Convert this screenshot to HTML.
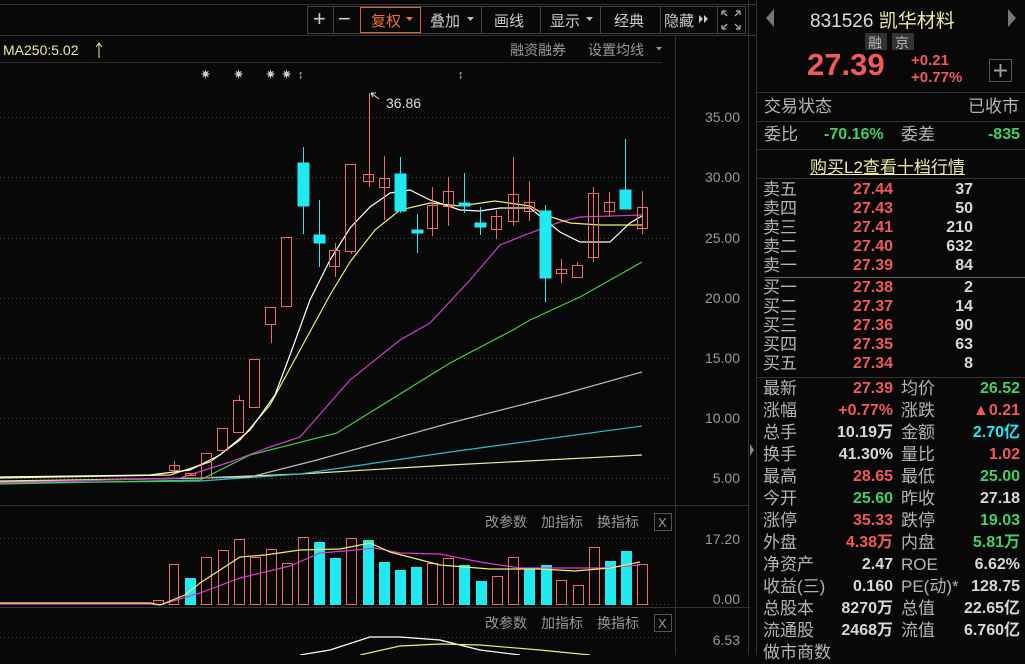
<!DOCTYPE html>
<html><head><meta charset="utf-8"><style>
*{margin:0;padding:0;box-sizing:border-box}
body{width:1025px;height:655px;background:#080808;overflow:hidden;position:relative;font-family:"Liberation Sans","Noto Sans CJK SC",sans-serif;color:#b4b4b4}
.a{position:absolute;white-space:nowrap}
.r{text-align:right}
.red{color:#f05a5a}.grn{color:#3ed167}.cy{color:#20eaf0}.wh{color:#d8d8d8}
.rp{font-size:16px;font-weight:bold}
.row{line-height:22px;height:22px}
</style></head><body>
<svg class="a" style="left:0;top:0" width="757" height="655" font-family="Liberation Sans,Noto Sans CJK SC,sans-serif">
<line x1="0" y1="4.5" x2="757" y2="4.5" stroke="#333"/>
<line x1="0" y1="35.5" x2="757" y2="35.5" stroke="#333"/>
<line x1="675.5" y1="36" x2="675.5" y2="655" stroke="#333"/>
<line x1="0" y1="62.5" x2="662" y2="62.5" stroke="#2a2a2a"/>
<line x1="0" y1="505.5" x2="750" y2="505.5" stroke="#333"/>
<line x1="0" y1="607.5" x2="750" y2="607.5" stroke="#333"/>
<line x1="748.5" y1="0" x2="748.5" y2="655" stroke="#333"/>
<line x1="756.5" y1="0" x2="756.5" y2="655" stroke="#333"/>
<path d="M750 444 L754 450 L750 456Z" fill="#888"/>
<rect x="307.5" y="6.5" width="438" height="27" fill="none" stroke="#444"/>
<g stroke="#444"><line x1="333.5" y1="7" x2="333.5" y2="33"/><line x1="360.5" y1="7" x2="360.5" y2="33"/><line x1="481.5" y1="7" x2="481.5" y2="33"/><line x1="540.5" y1="7" x2="540.5" y2="33"/><line x1="600.5" y1="7" x2="600.5" y2="33"/><line x1="660.5" y1="7" x2="660.5" y2="33"/><line x1="717.5" y1="7" x2="717.5" y2="33"/></g>
<rect x="360.5" y="7.5" width="60" height="25" fill="none" stroke="#e0662a"/>
<g fill="#ccc" font-size="15">
<text x="313" y="26" font-size="22">+</text><text x="338" y="26" font-size="22">−</text>
<text x="371" y="26" fill="#f07030">复权</text><path d="M406 17h7l-3.5 4z" fill="#f07030"/>
<text x="430" y="26">叠加</text><path d="M467 17h7l-3.5 4z" fill="#bbb"/>
<text x="494" y="26">画线</text>
<text x="550" y="26">显示</text><path d="M586 17h7l-3.5 4z" fill="#bbb"/>
<text x="614" y="26">经典</text>
<text x="664" y="26">隐藏</text><path d="M699 15l4 4-4 4zM704 15l4 4-4 4z" fill="#ccc"/>
</g>
<path d="M722 11h4M722 11v4M740 11h-4M740 11v4M722 29h4M722 29v-4M740 29h-4M740 29v-4M723 12l4 4M739 12l-4 4M723 28l4-4M739 28l-4-4" stroke="#bbb" stroke-width="1.2" fill="none"/>
<text x="3" y="55" font-size="14" fill="#eee89a">MA250:5.02</text>
<path d="M99 58V43M96 47l3-4 3 4" stroke="#eee89a" fill="none"/>
<text x="510" y="55" font-size="14" fill="#999">融资融券</text>
<text x="588" y="55" font-size="14" fill="#999">设置均线</text><path d="M656 47h6l-3 3.5z" fill="#999"/>
<g font-size="11" fill="#ccc" font-weight="bold"><text x="201" y="78">✷</text><text x="234" y="78">✷</text><text x="266" y="78">✷</text><text x="282" y="78">✷</text><text x="298" y="78">↕</text><text x="458" y="78">↕</text></g>
<g stroke="#444" stroke-dasharray="1 3">
<line x1="0" y1="117.5" x2="670" y2="117.5"/><line x1="0" y1="177.5" x2="670" y2="177.5"/><line x1="0" y1="238.5" x2="670" y2="238.5"/><line x1="0" y1="298.5" x2="670" y2="298.5"/><line x1="0" y1="358.5" x2="670" y2="358.5"/><line x1="0" y1="418.5" x2="670" y2="418.5"/><line x1="0" y1="478.5" x2="670" y2="478.5"/>
<line x1="0" y1="538.5" x2="670" y2="538.5"/><line x1="0" y1="604.5" x2="670" y2="604.5"/><line x1="0" y1="637.5" x2="670" y2="637.5"/>
</g>
<g font-size="14" fill="#999" text-anchor="end">
<text x="740" y="122">35.00</text><text x="740" y="182">30.00</text><text x="740" y="243">25.00</text><text x="740" y="303">20.00</text><text x="740" y="363">15.00</text><text x="740" y="423">10.00</text><text x="740" y="483">5.00</text>
<text x="740" y="544">17.20</text><text x="740" y="604">0.00</text><text x="740" y="645">6.53</text>
</g>
<g fill="none" stroke-width="1.2">
<polyline stroke="#eeeea0" points="0,481 200,478 300,474 450,465 642,455"/>
<polyline stroke="#2bbcd0" points="0,483 200,481 300,474 450,452 642,426"/>
<polyline stroke="#bbb" points="0,482 250,477 317,460 450,423 560,395 642,372"/>
<polyline stroke="#3fd13f" points="0,484 200,480 250,455 337,433 450,363 513,330 530,320 580,297 642,262"/>
<polyline stroke="#d23cd2" points="0,483 180,478 230,462 270,447 300,437 350,380 400,340 430,323 470,280 500,245 530,233 560,222 580,217 642,215"/>
<polyline stroke="#f0f060" points="0,478 170,475 210,462 240,440 270,405 300,350 330,295 350,262 375,230 400,210 430,203 460,206 495,201 530,206 545,215 570,223 600,225 642,225"/>
<polyline stroke="#fff" points="0,477 150,475 190,470 220,455 250,430 275,395 290,355 310,300 330,260 350,228 370,207 390,193 410,190 430,200 460,210 480,211 500,208 530,208 545,220 560,232 580,242 610,242 630,223 642,216"/>
</g>
<g stroke="#ee6a62" fill="none">
<line x1="174.5" y1="461" x2="174.5" y2="470"/><rect x="169.5" y="465.5" width="10" height="5"/>
<rect x="185.5" y="473.5" width="10" height="2"/>
<rect x="201.5" y="453.5" width="10" height="24"/>
<line x1="223.5" y1="450" x2="223.5" y2="452"/><rect x="217.5" y="428.5" width="10" height="22"/>
<line x1="239.5" y1="395" x2="239.5" y2="400"/><rect x="233.5" y="400.5" width="10" height="32"/>
<rect x="249.5" y="359.5" width="10" height="48"/>
<line x1="271.5" y1="324" x2="271.5" y2="343"/><rect x="265.5" y="307.5" width="10" height="17"/>
<rect x="281.5" y="237.5" width="10" height="69"/>
<line x1="335.5" y1="243" x2="335.5" y2="277"/><rect x="329.5" y="250.5" width="10" height="16"/>
<line x1="351.5" y1="251" x2="351.5" y2="254"/><rect x="345.5" y="164.5" width="10" height="87"/>
<line x1="369.5" y1="93" x2="369.5" y2="187"/><rect x="363.5" y="174.5" width="10" height="7"/>
<line x1="384.5" y1="156" x2="384.5" y2="220"/><rect x="379.5" y="178.5" width="10" height="9"/>
<line x1="432.5" y1="187" x2="432.5" y2="236"/><rect x="427.5" y="205.5" width="10" height="23"/>
<line x1="448.5" y1="177" x2="448.5" y2="226"/><rect x="443.5" y="191.5" width="10" height="15"/>
<line x1="496.5" y1="210" x2="496.5" y2="239"/><rect x="491.5" y="216.5" width="10" height="13"/>
<line x1="513.5" y1="157" x2="513.5" y2="226"/><rect x="508.5" y="194.5" width="10" height="27"/>
<line x1="529.5" y1="181" x2="529.5" y2="221"/><rect x="524.5" y="202.5" width="10" height="9"/>
<line x1="561.5" y1="259" x2="561.5" y2="283"/><rect x="556.5" y="269.5" width="10" height="4"/>
<line x1="577.5" y1="262" x2="577.5" y2="265"/><rect x="572.5" y="265.5" width="10" height="12"/>
<line x1="593.5" y1="187" x2="593.5" y2="262"/><rect x="588.5" y="193.5" width="10" height="64"/>
<line x1="609.5" y1="192" x2="609.5" y2="217"/><rect x="604.5" y="202.5" width="10" height="9"/>
<line x1="642.5" y1="191" x2="642.5" y2="234"/><rect x="637.5" y="207.5" width="10" height="21"/>
</g>
<g stroke="#20eaf0" fill="#20eaf0">
<line x1="303.5" y1="147" x2="303.5" y2="234"/><rect x="298" y="163" width="11" height="43"/>
<line x1="319.5" y1="200" x2="319.5" y2="267"/><rect x="314" y="235" width="11" height="8"/>
<line x1="400.5" y1="157" x2="400.5" y2="213"/><rect x="395" y="174" width="11" height="37"/>
<line x1="417.5" y1="214" x2="417.5" y2="253"/><rect x="412" y="230" width="11" height="3"/>
<line x1="464.5" y1="173" x2="464.5" y2="213"/><rect x="459" y="203" width="11" height="3"/>
<line x1="480.5" y1="207" x2="480.5" y2="235"/><rect x="475" y="223" width="11" height="4"/>
<line x1="545.5" y1="205" x2="545.5" y2="302"/><rect x="540" y="211" width="11" height="67"/>
<line x1="625.5" y1="139" x2="625.5" y2="190"/><rect x="620" y="190" width="11" height="19"/>
</g>
<path d="M371 93l8 6M371 93l5 0M371 93l2 4" stroke="#ddd" fill="none"/>
<text x="386" y="108" font-size="14" fill="#ddd">36.86</text>
<g font-size="14" fill="#999"><text x="485" y="527">改参数</text><text x="541" y="527">加指标</text><text x="597" y="527">换指标</text>
<text x="485" y="628">改参数</text><text x="541" y="628">加指标</text><text x="597" y="628">换指标</text></g>
<rect x="654.5" y="513.5" width="17" height="17" fill="none" stroke="#555"/><text x="658" y="527" font-size="13" fill="#999">X</text>
<rect x="654.5" y="614.5" width="17" height="17" fill="none" stroke="#555"/><text x="658" y="628" font-size="13" fill="#999">X</text>
<g stroke="#ee6a62" fill="none">
<rect x="169.5" y="564.5" width="9" height="40"/><rect x="201.5" y="557.5" width="10" height="47"/><rect x="218.5" y="550.5" width="10" height="54"/><rect x="234.5" y="539.5" width="10" height="65"/><rect x="250.5" y="557.5" width="10" height="47"/><rect x="266.5" y="549.5" width="10" height="55"/><rect x="282.5" y="563.5" width="10" height="41"/><rect x="298.5" y="537.5" width="10" height="67"/><rect x="346.5" y="538.5" width="10" height="66"/><rect x="427.5" y="563.5" width="10" height="41"/><rect x="443.5" y="558.5" width="10" height="46"/><rect x="492.5" y="576.5" width="10" height="28"/><rect x="508.5" y="557.5" width="10" height="47"/><rect x="556.5" y="580.5" width="10" height="24"/><rect x="573.5" y="585.5" width="10" height="19"/><rect x="589.5" y="547.5" width="10" height="57"/><rect x="637.5" y="564.5" width="10" height="40"/>
<rect x="153.5" y="600.5" width="10" height="4"/>
</g>
<g fill="#20eaf0">
<rect x="185" y="578" width="11" height="27"/><rect x="314" y="542" width="11" height="63"/><rect x="330" y="558" width="11" height="47"/><rect x="363" y="540" width="11" height="65"/><rect x="379" y="562" width="11" height="43"/><rect x="395" y="570" width="11" height="35"/><rect x="411" y="567" width="11" height="38"/><rect x="459" y="565" width="11" height="40"/><rect x="476" y="581" width="11" height="24"/><rect x="524" y="568" width="11" height="37"/><rect x="541" y="565" width="11" height="40"/><rect x="605" y="561" width="11" height="44"/><rect x="621" y="551" width="11" height="54"/>
</g>
<g fill="none" stroke-width="1.2">
<polyline stroke="#d23cd2" points="0,604 150,604 160,605 200,593 240,578 290,566 320,553 345,551 375,548 400,553 440,554 480,562 520,568 600,568 640,565"/>
<polyline stroke="#f0f060" points="0,603 150,603 160,605 185,595 200,583 240,557 265,555 300,550 340,549 370,543 390,552 440,565 490,569 540,569 575,571 610,568 640,562"/>
<polyline stroke="#fff" points="300,655 330,650 370,637 400,637 440,640 480,650 520,655"/>
<polyline stroke="#f0f060" points="360,655 400,646 440,644 480,645 540,650 590,655"/>
</g>
</svg>
<div class="a" style="left:757px;top:0;width:268px;height:655px">
<svg class="a" style="left:0;top:0" width="268" height="655">
<path d="M9 18l8-9v18z" fill="#777"/><path d="M259 18l-8-9v18z" fill="#777"/>
<rect x="108" y="33" width="22" height="17" fill="#333"/><rect x="135" y="33" width="22" height="17" fill="#333"/>
<rect x="232.5" y="59.5" width="22" height="22" fill="none" stroke="#555"/><path d="M237 70.5h13M243.5 64v13" stroke="#999" stroke-width="2"/>
<g stroke="#333"><line x1="0" y1="92.5" x2="268" y2="92.5"/><line x1="0" y1="121.5" x2="268" y2="121.5"/><line x1="0" y1="149.5" x2="268" y2="149.5"/><line x1="0" y1="178.5" x2="268" y2="178.5"/><line x1="0" y1="377.5" x2="268" y2="377.5"/></g>
<line x1="8" y1="277.5" x2="268" y2="277.5" stroke="#666"/>
</svg>
<div class="a" style="left:53px;top:6px;font-size:19px;color:#ddd">831526 <span style="color:#eeeaa0">凯华材料</span></div>
<div class="a" style="left:111px;top:33px;font-size:14px;color:#bbb">融</div>
<div class="a" style="left:138px;top:33px;font-size:14px;color:#bbb">京</div>
<div class="a red" style="left:50px;top:47px;font-size:31px;font-weight:bold">27.39</div>
<div class="a red" style="left:154px;top:52px;font-size:15px;font-weight:bold;line-height:17px">+0.21<br>+0.77%</div>
<div class="a row" style="left:7px;top:96px;font-size:17px">交易状态</div>
<div class="a row" style="right:6px;top:96px;font-size:17px">已收市</div>
<div class="a row" style="left:7px;top:124px;font-size:17px">委比</div>
<div class="a grn rp row" style="left:67px;top:124px">-70.16%</div>
<div class="a row" style="left:144px;top:124px;font-size:17px">委差</div>
<div class="a grn rp row" style="right:5px;top:124px">-835</div>
<div class="a" style="left:53px;top:153px;font-size:17px;color:#eeeaa0;text-decoration:underline">购买L2查看十档行情</div>
<div class="a" style="left:6px;top:180px;font-size:17px;line-height:19px">卖五<br>卖四<br>卖三<br>卖二<br>卖一</div>
<div class="a red rp r" style="left:70px;width:66px;top:180px;line-height:19px">27.44<br>27.43<br>27.41<br>27.40<br>27.39</div>
<div class="a wh rp r" style="left:160px;width:56px;top:180px;line-height:19px">37<br>50<br>210<br>632<br>84</div>
<div class="a" style="left:6px;top:278px;font-size:17px;line-height:19px">买一<br>买二<br>买三<br>买四<br>买五</div>
<div class="a red rp r" style="left:70px;width:66px;top:278px;line-height:19px">27.38<br>27.37<br>27.36<br>27.35<br>27.34</div>
<div class="a wh rp r" style="left:160px;width:56px;top:278px;line-height:19px">2<br>14<br>90<br>63<br>8</div>
<div class="a" style="left:6px;top:378px;font-size:17px;line-height:22px">最新<br>涨幅<br>总手<br>换手<br>最高<br>今开<br>涨停<br>外盘<br>净资产<br>收益(三)<br>总股本<br>流通股<br>做市商数</div>
<div class="a rp r" style="left:60px;width:76px;top:378px;line-height:22px"><span class="red">27.39</span><br><span class="red">+0.77%</span><br><span class="wh">10.19万</span><br><span class="wh">41.30%</span><br><span class="red">28.65</span><br><span class="grn">25.60</span><br><span class="red">35.33</span><br><span class="red">4.38万</span><br><span class="wh">2.47</span><br><span class="wh">0.160</span><br><span class="wh">8270万</span><br><span class="wh">2468万</span></div>
<div class="a" style="left:144px;top:378px;font-size:17px;line-height:22px">均价<br>涨跌<br>金额<br>量比<br>最低<br>昨收<br>跌停<br>内盘<br>ROE<br>PE(动)*<br>总值<br>流值</div>
<div class="a rp r" style="left:180px;width:83px;top:378px;line-height:22px"><span class="grn">26.52</span><br><span class="red">▲0.21</span><br><span class="cy">2.70亿</span><br><span class="red">1.02</span><br><span class="grn">25.00</span><br><span class="wh">27.18</span><br><span class="grn">19.03</span><br><span class="grn">5.81万</span><br><span class="wh">6.62%</span><br><span class="wh">128.75</span><br><span class="wh">22.65亿</span><br><span class="wh">6.760亿</span></div>
</div>
</body></html>
